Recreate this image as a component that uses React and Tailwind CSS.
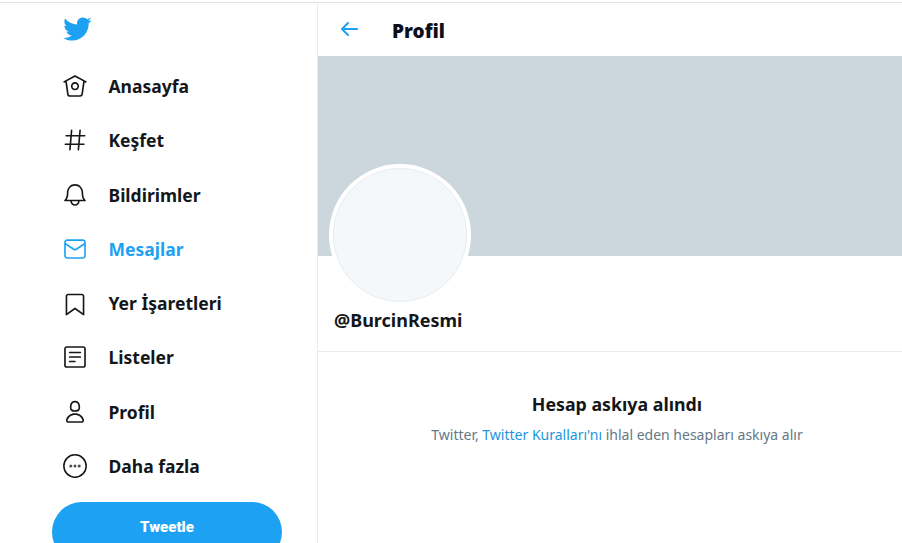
const bird = "M23.643 4.937c-.835.37-1.732.62-2.675.733.962-.576 1.7-1.49 2.048-2.578-.9.534-1.897.922-2.958 1.13-.85-.904-2.06-1.47-3.4-1.47-2.572 0-4.658 2.086-4.658 4.66 0 .364.042.718.12 1.06-3.873-.195-7.304-2.05-9.602-4.868-.4.69-.63 1.49-.63 2.342 0 1.616.823 3.043 2.072 3.878-.764-.025-1.482-.234-2.11-.583v.06c0 2.257 1.605 4.14 3.737 4.568-.392.106-.803.162-1.227.162-.3 0-.593-.028-.877-.082.593 1.85 2.313 3.198 4.352 3.234-1.595 1.25-3.604 1.995-5.786 1.995-.376 0-.747-.022-1.112-.065 2.062 1.323 4.51 2.093 7.14 2.093 8.57 0 13.255-7.098 13.255-13.254 0-.2-.005-.402-.014-.602.91-.658 1.7-1.477 2.323-2.41z"

const navItems = [
  {
    label: "Anasayfa",
    paths: [
      "M22.46 7.57L12.357 2.115c-.223-.12-.49-.12-.713 0L1.543 7.57c-.364.197-.5.652-.303 1.017.135.25.394.393.66.393.12 0 .243-.03.356-.09l.815-.44L4.7 19.963c.214 1.215 1.308 2.062 2.658 2.062h9.282c1.352 0 2.445-.848 2.663-2.087l1.626-11.49.818.442c.364.193.82.06 1.017-.304.196-.363.06-.818-.304-1.016zm-4.638 12.133c-.107.606-.703.822-1.18.822H7.36c-.48 0-1.075-.216-1.178-.798L4.48 7.69 12 3.628l7.522 4.06-1.7 12.015z",
      "M8.22 12.184c0 2.084 1.695 3.78 3.78 3.78s3.78-1.696 3.78-3.78-1.695-3.78-3.78-3.78-3.78 1.696-3.78 3.78zm6.06 0c0 1.258-1.022 2.28-2.28 2.28s-2.28-1.022-2.28-2.28 1.022-2.28 2.28-2.28 2.28 1.022 2.28 2.28z",
    ],
  },
  {
    label: "Keşfet",
    paths: [
      "M21 7.337h-3.93l.372-4.272c.036-.412-.27-.775-.682-.812-.417-.03-.776.27-.812.683l-.383 4.4h-6.32l.37-4.27c.037-.413-.27-.776-.68-.813-.42-.03-.777.27-.813.683l-.382 4.4H3.782c-.414 0-.75.337-.75.75s.336.75.75.75H7.61l-.55 6.327H3c-.414 0-.75.336-.75.75s.336.75.75.75h3.93l-.372 4.272c-.036.412.27.775.682.812l.066.003c.385 0 .712-.295.746-.686l.383-4.4h6.32l-.37 4.27c-.036.413.27.776.682.813l.066.003c.385 0 .712-.295.746-.686l.382-4.4h3.957c.413 0 .75-.337.75-.75s-.337-.75-.75-.75H16.39l.55-6.327H21c.414 0 .75-.336.75-.75s-.336-.75-.75-.75zm-6.115 7.826h-6.32l.55-6.326h6.32l-.55 6.326z",
    ],
  },
  {
    label: "Bildirimler",
    paths: [
      "M21.697 16.468c-.02-.016-2.14-1.64-2.103-6.03.02-2.532-.812-4.782-2.347-6.335C15.872 2.71 14.01 1.94 12.005 1.93h-.013c-2.004.01-3.866.78-5.242 2.174-1.534 1.553-2.368 3.802-2.346 6.334.037 4.33-2.02 5.967-2.102 6.03-.26.193-.366.53-.265.838.102.308.39.515.712.515h4.92c.102 2.31 1.997 4.16 4.33 4.16s4.226-1.85 4.327-4.16h4.922c.322 0 .61-.206.71-.514.103-.307-.003-.645-.263-.838zM12 20.478c-1.505 0-2.73-1.177-2.828-2.658h5.656c-.1 1.48-1.323 2.66-2.828 2.66zM4.38 16.32c.74-1.132 1.548-3.028 1.524-5.896-.018-2.16.644-3.982 1.913-5.267C8.91 4.05 10.397 3.437 12 3.43c1.603.008 3.087.62 4.18 1.728 1.27 1.285 1.933 3.106 1.915 5.267-.024 2.868.785 4.765 1.525 5.896H4.38z",
    ],
  },
  {
    label: "Mesajlar",
    active: true,
    paths: [
      "M19.25 3.018H4.75C3.233 3.018 2 4.252 2 5.77v12.495c0 1.518 1.233 2.753 2.75 2.753h14.5c1.517 0 2.75-1.235 2.75-2.753V5.77c0-1.518-1.233-2.752-2.75-2.752zm-14.5 1.5h14.5c.69 0 1.25.56 1.25 1.25v.714l-8.05 5.367c-.273.18-.626.182-.9-.002L3.5 6.482v-.714c0-.69.56-1.25 1.25-1.25zm14.5 14.998H4.75c-.69 0-1.25-.56-1.25-1.25V8.24l7.24 4.83c.383.256.822.384 1.26.384.44 0 .877-.128 1.26-.383l7.24-4.83v10.022c0 .69-.56 1.25-1.25 1.25z",
    ],
  },
  {
    label: "Yer İşaretleri",
    paths: [
      "M19.9 23.5c-.157 0-.312-.05-.442-.144L12 17.928l-7.458 5.43c-.228.164-.53.19-.782.06-.25-.127-.41-.385-.41-.667V5.6c0-1.24 1.01-2.25 2.25-2.25h12.798c1.24 0 2.25 1.01 2.25 2.25v17.15c0 .282-.158.54-.41.668-.106.055-.223.082-.34.082zM12 16.25c.155 0 .31.048.44.144l6.71 4.883V5.6c0-.412-.337-.75-.75-.75H5.6c-.413 0-.75.338-.75.75v15.677l6.71-4.883c.13-.096.285-.144.44-.144z",
    ],
  },
  {
    label: "Listeler",
    paths: [
      "M19.75 22H4.25C3.01 22 2 20.99 2 19.75V4.25C2 3.01 3.01 2 4.25 2h15.5C20.99 2 22 3.01 22 4.25v15.5c0 1.24-1.01 2.25-2.25 2.25zM4.25 3.5c-.414 0-.75.337-.75.75v15.5c0 .413.336.75.75.75h15.5c.414 0 .75-.337.75-.75V4.25c0-.413-.336-.75-.75-.75H4.25z",
      "M17 8.64H7c-.414 0-.75-.337-.75-.75s.336-.75.75-.75h10c.414 0 .75.336.75.75s-.336.75-.75.75zm0 4.11H7c-.414 0-.75-.336-.75-.75s.336-.75.75-.75h10c.414 0 .75.336.75.75s-.336.75-.75.75zm-5 4.11H7c-.414 0-.75-.335-.75-.75s.336-.75.75-.75h5c.414 0 .75.337.75.75s-.336.75-.75.75z",
    ],
  },
  {
    label: "Profil",
    paths: [
      "M12 11.816c1.355 0 2.872-.15 3.84-1.256.814-.93 1.078-2.368.806-4.392-.38-2.825-2.117-4.512-4.646-4.512S7.734 3.343 7.354 6.17c-.272 2.022-.008 3.46.806 4.39.968 1.107 2.485 1.256 3.84 1.256zM8.84 6.368c.162-1.2.787-3.212 3.16-3.212s2.998 2.013 3.16 3.212c.207 1.55.057 2.627-.45 3.205-.455.52-1.266.743-2.71.743s-2.255-.223-2.71-.743c-.507-.578-.657-1.656-.45-3.205zm11.44 12.868c-.877-3.526-4.282-5.99-8.28-5.99s-7.403 2.464-8.28 5.99c-.172.692-.028 1.4.395 1.94.408.52 1.04.82 1.733.82h12.304c.693 0 1.325-.3 1.733-.82.424-.54.567-1.247.394-1.94zm-1.576 1.016c-.126.16-.316.246-.552.246H5.848c-.235 0-.426-.085-.552-.246-.137-.174-.18-.412-.12-.654.71-2.855 3.517-4.85 6.824-4.85s6.114 1.994 6.824 4.85c.06.242.017.48-.12.654z",
    ],
  },
  { label: "Daha fazla", more: true, paths: [] },
]

function NavRow({ item }) {
  return (
    <div className={`flex h-[54.25px] items-center ${item.active ? "text-[#1da1f2]" : "text-[#14171a]"}`}>
      <svg viewBox="0 0 24 24" className="h-[26px] w-[26px] fill-current">
        {item.paths.map((d) => (
          <path key={d} d={d} />
        ))}
        {item.more && (
          <g>
            <circle cx="12" cy="12" r="10.3" fill="none" stroke="currentColor" strokeWidth="1.4" />
            <circle cx="8.1" cy="12" r="1.4" fill="#4a5056" />
            <circle cx="12" cy="12" r="1.4" fill="#4a5056" />
            <circle cx="15.9" cy="12" r="1.4" fill="#4a5056" />
          </g>
        )}
      </svg>
      <span className="ml-[20.5px] text-[17.5px] font-bold">{item.label}</span>
    </div>
  )
}

export default function App() {
  return (
    <div className="h-[543px] w-[902px] overflow-hidden bg-white pt-[2px] font-['Noto_Sans',sans-serif]">
      <div className="flex h-[541px] border-t border-[#e1e4e6]">
        <aside className="w-[318px] shrink-0 border-r border-[#e6ecf0]">
          <div className="pl-[62px] pt-[11px]">
            <svg viewBox="0 0 24 24" className="h-[30px] w-[30px] fill-[#1da1f2]">
              <path d={bird} />
            </svg>
          </div>
          <nav className="mt-[15.05px] pl-[62px]">
            {navItems.map((item) => (
              <NavRow key={item.label} item={item} />
            ))}
          </nav>
          <button className="ml-[52px] mt-[9px] h-[60px] w-[230px] rounded-[30px] bg-[#1da1f2] pb-[10px] font-['Roboto',sans-serif] text-[15px] font-black text-white">
            Tweetle
          </button>
        </aside>

        <main className="min-w-0 flex-1">
          <header className="flex h-[53px] items-center pl-[19px]">
            <svg viewBox="0 0 24 24" className="mb-[1px] h-[24px] w-[24px] fill-[#1da1f2]">
              <path d="M20 11H7.414l4.293-4.293c.39-.39.39-1.023 0-1.414s-1.023-.39-1.414 0l-6 6c-.39.39-.39 1.023 0 1.414l6 6c.195.195.45.293.707.293s.512-.098.707-.293c.39-.39.39-1.023 0-1.414L7.414 13H20c.553 0 1-.447 1-1s-.447-1-1-1z" />
            </svg>
            <h1 className="ml-[31px] mt-[4px] text-[19px] font-black text-[#0b0f1c]">Profil</h1>
          </header>
          <div className="h-[200px] bg-[#ccd6dd]" />
          <div className="flex h-[96px] flex-col border-b border-[#e6ecf0] pl-[11px]">
            <div className="-mt-[92px] h-[142px] w-[142px] shrink-0 rounded-full bg-white p-[4px]">
              <div className="h-full w-full rounded-full border border-[#e6ecf0] bg-[#f5f8fa]" />
            </div>
            <p className="ml-[5px] mt-[1px] text-[18px] font-bold text-[#14171a]">@BurcinResmi</p>
          </div>
          <div className="pl-[14px] pt-[39px] text-center">
            <h2 className="text-[17.8px] font-bold text-[#14171a]">Hesap askıya alındı</h2>
            <p className="mt-[6px] text-[14px] text-[#657786]">
              Twitter, <span className="text-[#1b95e0]">Twitter Kuralları'nı</span> ihlal eden hesapları askıya alır
            </p>
          </div>
        </main>
      </div>
    </div>
  )
}
